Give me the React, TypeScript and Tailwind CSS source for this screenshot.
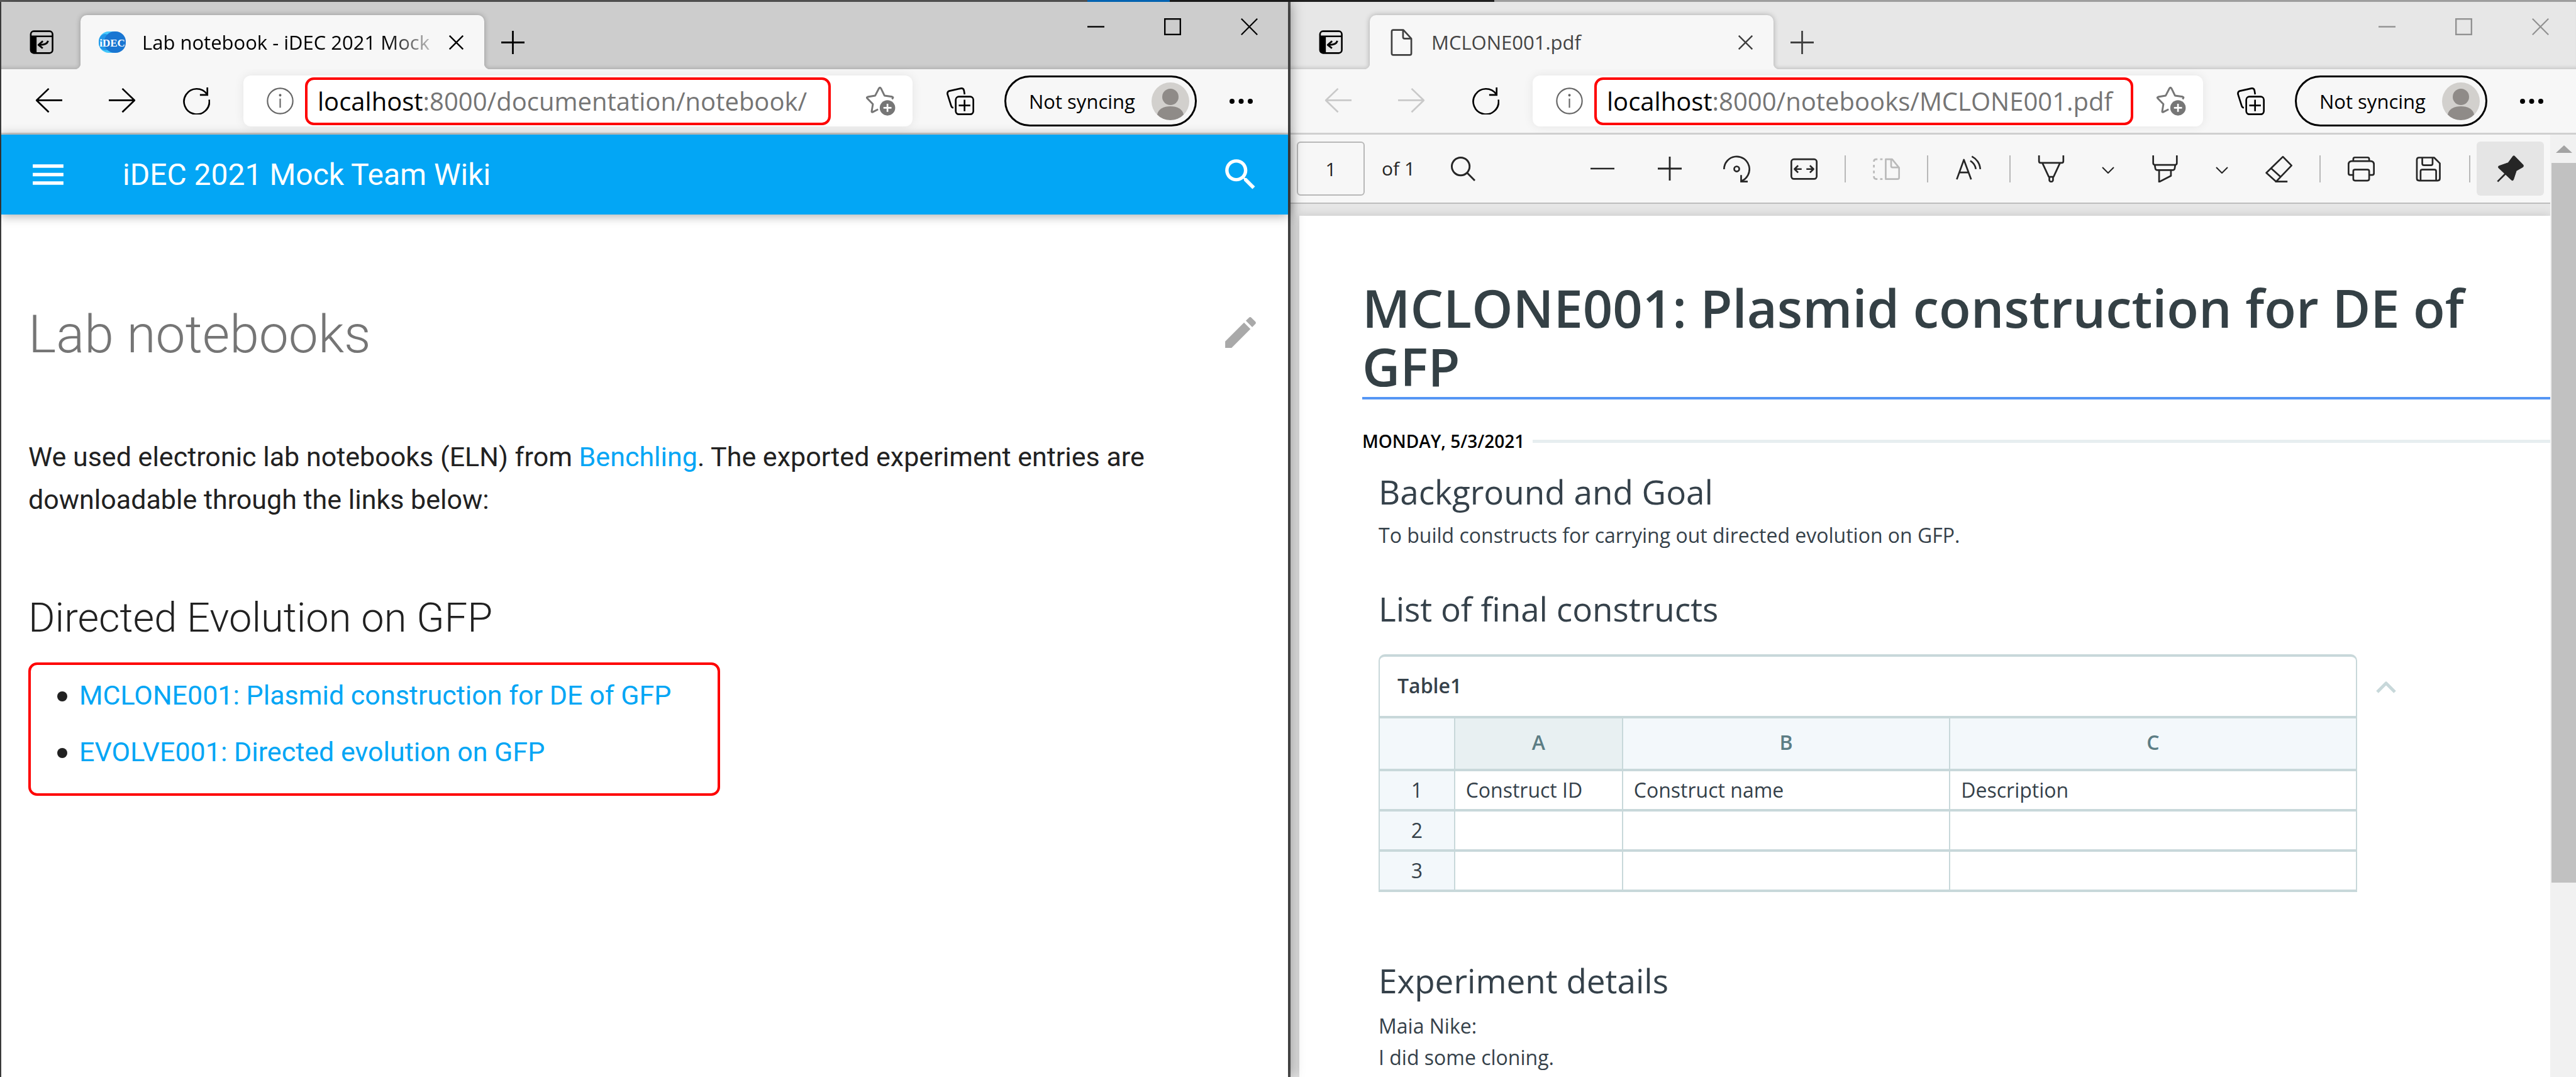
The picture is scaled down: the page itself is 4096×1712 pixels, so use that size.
import type { ReactNode } from "react";

type IconProps = {
  children: ReactNode;
  box?: string;
  className?: string;
  width?: number;
};

function Icon({ children, box = "0 0 16 16", className = "size-[43px]", width = 1 }: IconProps) {
  return (
    <svg
      viewBox={box}
      className={"shrink-0 " + className}
      fill="none"
      stroke="currentColor"
      strokeWidth={width}
      strokeLinejoin="round"
      aria-hidden="true"
    >
      {children}
    </svg>
  );
}

function IconButton({ label, children, className = "" }: { label: string; children: ReactNode; className?: string }) {
  return (
    <button type="button" aria-label={label} className={"flex shrink-0 items-center justify-center " + className}>
      {children}
    </button>
  );
}

const BackIcon = () => (
  <Icon>
    <path d="M16 7.6H.8M8 .7.8 7.6 8 14.6" />
  </Icon>
);

const ForwardIcon = () => (
  <Icon>
    <path d="M0 7.6h15.2M8 .7l7.2 6.9L8 14.6" />
  </Icon>
);

const RefreshIcon = () => (
  <Icon>
    <path d="M15.5 7.2A7.5 7.5 0 1 1 14.2 4" />
    <path d="M14.4 0v4.4H10" strokeLinejoin="miter" />
  </Icon>
);

const InfoIcon = () => (
  <Icon width={0.8}>
    <circle cx="8" cy="8" r="7.5" />
    <path d="M8 6.6v5.4" />
    <circle cx="8" cy="4.6" r=".35" fill="currentColor" />
  </Icon>
);

const StarAddIcon = () => (
  <Icon box="0 0 18 18" className="size-[48px]">
    <path
      d="M7.2 13.8 4 15.4q-.7.3-.6-.5l.7-4.2L.7 7.2q-.5-.6.3-.8l4.5-.8L7.7 1.3q.6-.9 1.2 0l2.1 4.3 4.6.7q.8.2.3.9l-.4.5"
      strokeWidth="1.1"
    />
    <circle cx="12.8" cy="12.9" r="4.6" fill="currentColor" stroke="none" />
    <path d="M12.8 10.5v4.8M10.4 12.9h4.8" stroke="#fff" />
  </Icon>
);

const CollectionsIcon = () => (
  <Icon box="0 0 16.5 16.5" className="size-[44px]">
    <rect x="5.5" y="5.5" width="10.5" height="10.5" rx="1.9" />
    <path d="M10.75 7.3v6.9M7.3 10.75h6.9" />
    <path d="M4.1 12.1q-1-.1-1.3-1.1L.6 4.1Q.3 2.6 1.7 2.1L8.4.6q1.6-.3 2 1.1l.4 2.4" />
  </Icon>
);

const MoreIcon = () => (
  <svg viewBox="0 0 37 8" className="h-[8px] w-[37px] shrink-0" fill="currentColor" aria-hidden="true">
    <circle cx="4" cy="4" r="4" />
    <circle cx="18.5" cy="4" r="4" />
    <circle cx="33" cy="4" r="4" />
  </svg>
);

const TabActionsIcon = () => (
  <Icon className="size-[38px]" width={1.1}>
    <rect x=".8" y=".7" width="14.6" height="14.6" rx="2" />
    <path d="M1 4.1h14.4" />
    <path d="M.8 4.1h3.9v11.2H2.8a2 2 0 0 1-2-2z" fill="currentColor" stroke="none" />
    <path d="M12.4 7.1c-.5 2-2.6 2.9-6.4 2.7M8.9 7.3 6 9.8l2.8 2.3" strokeWidth="1.2" />
  </Icon>
);

const PageIcon = () => (
  <Icon box="0 0 13 16" className="h-[43px] w-[35px]">
    <path d="M1.6.6h6L12.3 5.7v8.8q0 .9-.9.9H1.6q-.9 0-.9-.9v-13q0-.9.9-.9z" />
    <path d="M7.4.6v4.1q0 1 .9 1h4" />
  </Icon>
);

const PlusIcon = ({ className = "size-[37px]" }: { className?: string }) => (
  <Icon className={className} width={1.2}>
    <path d="M8 0v16M0 8h16" />
  </Icon>
);

const CrossIcon = ({ className, width }: { className: string; width: number }) => (
  <Icon className={className} width={width}>
    <path d="M.5.5l15 15M15.5.5l-15 15" />
  </Icon>
);

const IdecLogo = () => (
  <svg viewBox="0 0 43 34" className="h-[34px] w-[43px] shrink-0" role="img" aria-label="iDEC">
    <rect width="40" height="34" rx="16" fill="#45c8fb" />
    <rect x="0" y="4" width="20" height="26" rx="12" fill="#2196e8" />
    <rect x="9" width="34" height="34" rx="16" fill="#1976d2" />
    <text
      x="21.5"
      y="23.5"
      textAnchor="middle"
      fontFamily="Liberation Serif, serif"
      fontSize="17"
      fontWeight="700"
      fill="#fff"
    >
      iDEC
    </text>
  </svg>
);

const Avatar = () => (
  <svg viewBox="0 0 60 60" className="size-[60px] shrink-0" aria-hidden="true">
    <defs>
      <clipPath id="avatar-round">
        <circle cx="30" cy="30" r="30" />
      </clipPath>
    </defs>
    <circle cx="30" cy="30" r="30" fill="#d2d0cd" />
    <g clipPath="url(#avatar-round)" fill="#8f8b88">
      <circle cx="30" cy="23" r="13" />
      <path d="M9 51c2-9 10-13 21-13s19 4 21 13c-4 6-12 9-21 9S13 57 9 51z" />
    </g>
  </svg>
);

type BrowserProps = {
  tabIcon: ReactNode;
  tabTitle: string;
  host: string;
  path: string;
  active: boolean;
  urlBox: string;
  edge: string;
  controlsEdge: string;
  children: ReactNode;
};

function BrowserWindow({ tabIcon, tabTitle, host, path, active, urlBox, edge, controlsEdge, children }: BrowserProps) {
  return (
    <section className="flex min-w-0 flex-1 flex-col bg-white">
      <div
        className={
          "flex h-[107px] items-start justify-between overflow-hidden pl-[45px] shadow-[inset_0_-6px_5px_-3px_rgba(0,0,0,0.12)] " +
          (active ? "bg-[#cdcdcd]" : "bg-[#e7e7e7]")
        }
      >
        <div className="flex h-full items-center pt-[21px]">
          <IconButton label="Tab actions menu" className="mr-[43px] text-black">
            <TabActionsIcon />
          </IconButton>
          <div className="relative flex h-full w-[642px] items-center rounded-t-[10px] bg-[#f7f7f7] pr-[33px] pl-[29px] shadow-[0_0_8px_rgba(0,0,0,0.28)]">
            <span className="absolute bottom-0 -left-[10px] size-[10px] bg-[radial-gradient(circle_at_0_0,transparent_10px,#f7f7f7_11px)]" />
            <span className="absolute -right-[10px] bottom-0 size-[10px] bg-[radial-gradient(circle_at_100%_0,transparent_10px,#f7f7f7_11px)]" />
            <span className="mr-[26px] flex w-[43px] justify-center text-[#404040]">{tabIcon}</span>
            <span
              className={
                "min-w-0 flex-1 overflow-hidden text-[31px] leading-[44px] whitespace-nowrap " +
                (active
                  ? "text-black [mask-image:linear-gradient(to_right,black_84%,transparent_104%)]"
                  : "text-[#454545]")
              }
            >
              {tabTitle}
            </span>
            <IconButton label="Close tab" className={"ml-[26px] " + (active ? "text-black" : "text-[#404040]")}>
              <CrossIcon className="size-[23px]" width={1.7} />
            </IconButton>
          </div>
          <IconButton label="New tab" className={"ml-[27px] " + (active ? "text-black" : "text-[#404040]")}>
            <PlusIcon />
          </IconButton>
        </div>
        <div
          className={
            "flex items-center gap-[95px] pt-[26px] " + controlsEdge + (active ? " text-black" : " text-[#919191]")
          }
        >
          <IconButton label="Minimize">
            <Icon className="size-[27px]" width={1.4}>
              <path d="M0 8h16" />
            </Icon>
          </IconButton>
          <IconButton label="Maximize">
            <Icon className="size-[27px]" width={1.4}>
              <rect x=".7" y=".7" width="14.6" height="14.6" strokeLinejoin="miter" />
            </Icon>
          </IconButton>
          <IconButton label="Close window">
            <CrossIcon className="size-[27px]" width={1.3} />
          </IconButton>
        </div>
      </div>

      <div className={"flex h-[104px] items-center border-b-[3px] border-[#d0d0d0] bg-[#f7f7f7] pl-[54px] " + edge}>
        <IconButton label="Back" className={active ? "text-black" : "text-[#c9c9c9]"}>
          <BackIcon />
        </IconButton>
        <IconButton label="Forward" className={"ml-[74px] " + (active ? "text-black" : "text-[#c9c9c9]")}>
          <ForwardIcon />
        </IconButton>
        <IconButton label="Refresh" className="ml-[75px] text-black">
          <RefreshIcon />
        </IconButton>
        <div className="ml-[53px] flex h-[81px] min-w-0 flex-1 items-center rounded-[12px] bg-white pr-[26px] pl-[37px] shadow-[0_0_16px_rgba(0,0,0,0.08)]">
          <IconButton label="View site information" className="text-[#666]">
            <InfoIcon />
          </IconButton>
          <div
            role="textbox"
            tabIndex={0}
            aria-label="Address"
            className={
              "ml-[18px] flex h-[76px] items-center rounded-[14px] border-4 border-[#fe0000] pl-[16px] text-[40px] leading-[56px] whitespace-nowrap text-[#757575] " +
              urlBox
            }
          >
            <span className="text-black">{host}</span>
            {path}
          </div>
          <IconButton label="Add this page to favorites" className="ml-auto text-[#767676]">
            <StarAddIcon />
          </IconButton>
        </div>
        <IconButton label="Collections" className="ml-[54px] text-black">
          <CollectionsIcon />
        </IconButton>
        <button
          type="button"
          className="ml-[48px] flex h-[81px] w-[306px] shrink-0 items-center justify-between rounded-full border-[3px] border-black pr-[9px] pl-[36px] text-[31px] leading-[44px] whitespace-nowrap text-black"
        >
          Not syncing
          <Avatar />
        </button>
        <IconButton label="Settings and more" className="ml-[52px] text-black">
          <MoreIcon />
        </IconButton>
      </div>
      {children}
    </section>
  );
}

const notebooks = ["MCLONE001: Plasmid construction for DE of GFP", "EVOLVE001: Directed evolution on GFP"];

function WikiPage() {
  return (
    <div className="flex flex-1 flex-col bg-white font-['Roboto',sans-serif]">
      <header className="flex h-[127px] items-center bg-[#03a6f5] pr-[43px] pl-[42px] text-white shadow-[0_2px_16px_rgba(0,0,0,0.35)]">
        <IconButton label="Open menu">
          <svg viewBox="0 0 24 24" className="size-[65px]" fill="currentColor" aria-hidden="true">
            <path d="M3 6h18v2H3V6m0 5h18v2H3v-2m0 5h18v2H3v-2Z" />
          </svg>
        </IconButton>
        <span className="ml-[86px] flex-1 text-[48px] leading-[64px]">iDEC 2021 Mock Team Wiki</span>
        <IconButton label="Search">
          <svg viewBox="0 0 24 24" className="size-[65px]" fill="currentColor" aria-hidden="true">
            <path d="M9.5 3A6.5 6.5 0 0 1 16 9.5c0 1.61-.59 3.09-1.56 4.23l.27.27h.79l5 5-1.5 1.5-5-5v-.79l-.27-.27A6.516 6.516 0 0 1 9.5 16 6.5 6.5 0 0 1 3 9.5 6.5 6.5 0 0 1 9.5 3m0 2C7 5 5 7 5 9.5S7 14 9.5 14 14 12 14 9.5 12 5 9.5 5z" />
          </svg>
        </IconButton>
      </header>
      <main className="pt-[135px] pl-[43px] text-[43px] leading-[68px] text-[#212121]">
        <div className="flex items-start justify-between pr-[43px]">
          <h1 className="text-[84px] leading-[112px] font-light text-[#757575]">Lab notebooks</h1>
          <a href="#edit" aria-label="Edit this page" className="pt-[20px] text-[#a9a9a9]">
            <svg viewBox="0 0 24 24" className="size-[65px]" fill="currentColor" aria-hidden="true">
              <path d="M20.71 7.04c.39-.39.39-1.04 0-1.41l-2.34-2.34c-.37-.39-1.02-.39-1.41 0l-1.84 1.83 3.75 3.75M3 17.25V21h3.75L17.81 9.93l-3.75-3.75L3 17.25z" />
            </svg>
          </a>
        </div>
        <p className="mt-[104px] w-[1860px] max-w-full">
          We used electronic lab notebooks (ELN) from{" "}
          <a href="#benchling" className="text-[#03a6f5]">
            Benchling
          </a>
          . The exported experiment entries are downloadable through the links below:
        </p>
        <h2 className="mt-[108px] text-[65px] leading-[92px] font-light">Directed Evolution on GFP</h2>
        <ul className="mt-[25px] flex w-[1100px] flex-col gap-[22px] rounded-[14px] border-4 border-[#fe0000] pt-[14px] pb-[32px] pl-[42px]">
          {notebooks.map((title) => (
            <li key={title} className="flex items-center">
              <span className="mt-[4px] mr-[19px] size-[16px] rounded-full bg-[#212121]" />
              <a href="#notebook" className="text-[#03a6f5]">
                {title}
              </a>
            </li>
          ))}
        </ul>
      </main>
    </div>
  );
}

const Separator = () => <span className="h-[43px] w-[2px] bg-[#b8b8b8]" />;

const ChevronDown = () => (
  <Icon box="0 0 20 12" className="h-[12px] w-[20px]" width={2}>
    <path d="M1 1l9 9 9-9" />
  </Icon>
);

function PdfToolbar() {
  return (
    <div className="flex h-[110px] items-center border-b-2 border-[#bdbdbd] bg-[#f7f7f7] px-[10px] text-[#262626]">
      <label className="flex items-center gap-[27px] text-[30px] leading-[40px] whitespace-nowrap">
        <input
          aria-label="Page number"
          defaultValue="1"
          className="h-[86px] w-[108px] rounded-[6px] border-2 border-[#b8b8b8] bg-[#f7f7f7] text-center"
        />
        of 1
      </label>
      <IconButton label="Find" className="ml-[57px]">
        <Icon className="size-[39px]" width={1.2}>
          <circle cx="6.4" cy="6.4" r="5.8" />
          <path d="M10.6 10.6 15.6 15.6" />
        </Icon>
      </IconButton>
      <div className="ml-auto flex items-center gap-[43px]">
        <div className="flex items-center gap-[64px]">
          <IconButton label="Zoom out" className="w-[43px]">
            <Icon className="size-[38px]" width={1.1}>
              <path d="M0 8h16" />
            </Icon>
          </IconButton>
          <IconButton label="Zoom in" className="w-[43px]">
            <PlusIcon className="size-[38px]" />
          </IconButton>
          <IconButton label="Rotate">
            <Icon>
              <path d="M.5 8.2A7.5 7.5 0 1 1 10.9 15.1" />
              <circle cx="8" cy="8" r="1.5" />
              <path d="M10.6 11.6v3.9h3.9" strokeLinejoin="miter" />
            </Icon>
          </IconButton>
          <IconButton label="Fit to width">
            <Icon>
              <rect x=".5" y="2.3" width="15" height="11.6" rx="1.5" />
              <path d="M2.4 8.1h4.2M4.5 6 2.4 8.1l2.1 2.1M13.6 8.1H9.4M11.5 6l2.1 2.1-2.1 2.1" />
            </Icon>
          </IconButton>
        </div>
        <Separator />
        <IconButton label="Page view" className="text-[#bababa]">
          <Icon>
            <path d="M7.6 2.3h3.8l4.1 5v5.8q0 .9-.9.9h-7z" />
            <path d="M10.8 2.5v3.8q0 .8.8.8h3.8" />
            <path d="M2.7 2.3H2Q.6 2.3.6 3.7M.6 5.6v1.6M.6 9v1.6M.6 12.3Q.6 14 2 14h.7M4.3 2.3h1.4M4.3 14h1.4" />
          </Icon>
        </IconButton>
        <Separator />
        <IconButton label="Read aloud">
          <Icon>
            <path d="M.9 14.2 5.1 2.6 9.4 14.2M2.4 10.1h5.5" />
            <path d="M8.9 3.2a7 7 0 0 1 3.3 4.9M9.8.6a9.5 9.5 0 0 1 5 7.5" />
          </Icon>
        </IconButton>
        <Separator />
        <div className="flex items-center gap-[59px]">
          <IconButton label="Draw">
            <Icon>
              <path d="M.8 0v3.4q0 1 1 1h12.4q1 0 1-1V0M2.8 4.5l3.8 8.2h2.8l3.8-8.2M6.9 12.7v1.8a1.1 1.1 0 0 0 2.2 0v-1.8" />
            </Icon>
          </IconButton>
          <IconButton label="Draw options" className="mt-[6px]">
            <ChevronDown />
          </IconButton>
          <IconButton label="Highlight">
            <Icon>
              <path d="M1 0v4.6q0 1 1 1h12q1 0 1-1V0M1.9 5.6l.4 2.2q.2.9 1.1.9h9.2q.9 0 1.1-.9l.4-2.2M4.5 8.7v7l7-3.6V8.7" />
            </Icon>
          </IconButton>
          <IconButton label="Highlight options" className="mt-[6px]">
            <ChevronDown />
          </IconButton>
          <IconButton label="Erase">
            <Icon>
              <path d="M10.4.8 15.5 6 6.4 15.5.6 10.3zM3.3 7.5l5.8 5.2M5.8 15.5h7.3" />
            </Icon>
          </IconButton>
        </div>
        <Separator />
        <div className="flex items-center gap-[64px]">
          <IconButton label="Print">
            <Icon>
              <path d="M3.3 3.4V2.2q0-1 1-1h7.4q1 0 1 1v1.2M3.3 11.6H1.5q-1 0-1-1V5.4q0-2 2-2h11q2 0 2 2v5.2q0 1-1 1h-1.8" />
              <rect x="3.3" y="8.4" width="9.4" height="6.5" rx="1" />
            </Icon>
          </IconButton>
          <IconButton label="Save">
            <Icon>
              <path d="M2.4 1.3h8.9L14.7 4.7v8.9q0 1.3-1.3 1.3h-11q-1.3 0-1.3-1.3v-11q0-1.3 1.3-1.3z" />
              <path d="M4.3 1.4v3.4q0 1 1 1h4.1q1 0 1-1V1.4M3.3 14.8V9.4q0-1 1-1h7.2q1 0 1 1v5.4" />
            </Icon>
          </IconButton>
        </div>
        <div className="flex items-center gap-[10px]">
          <Separator />
          <button
            type="button"
            aria-label="Unpin toolbar"
            className="flex h-[86px] w-[107px] items-center justify-center rounded-[6px] bg-[#e5e5e5]"
          >
            <Icon>
              <path
                d="M9.6.6Q10.1.1 10.6.6L15.5 5.6q.6.8-.3 1.4l-3.6 2-1.7 5.2q-.4 1-1.2.3L1.2 7.4Q.6 6.6 1.5 6.2l5.3-1.8z"
                fill="currentColor"
                strokeWidth=".4"
              />
              <path d="M5 11 .5 15.5" />
            </Icon>
          </button>
        </div>
      </div>
    </div>
  );
}

const rows = [
  ["1", "Construct ID", "Construct name", "Description"],
  ["2", "", "", ""],
  ["3", "", "", ""],
];

function PdfPage() {
  return (
    <article className="ml-[14px] flex-1 bg-white pt-[99px] pl-[100px] text-[32px] leading-[50px] text-[#35414a] shadow-[0_0_14px_rgba(0,0,0,0.15)]">
      <h1 className="border-b-4 border-[#5596f5] pr-[60px] pb-[3px] text-[83px] leading-[93px] font-semibold text-[#344045]">
        MCLONE001: Plasmid construction for DE of GFP
      </h1>
      <div className="mt-[46px] flex items-center gap-[13px]">
        <span className="text-[28px] leading-[40px] font-semibold text-black">MONDAY, 5/3/2021</span>
        <span className="h-[5px] flex-1 bg-[#e7eef0]" />
      </div>
      <div className="pl-[26px]">
        <h2 className="mt-[26px] text-[53px] leading-[70px]">Background and Goal</h2>
        <p className="mt-[9px]">To build constructs for carrying out directed evolution on GFP.</p>
        <h2 className="mt-[57px] text-[53px] leading-[70px]">List of final constructs</h2>
        <div className="mt-[37px] flex items-start gap-[30px]">
          <table className="w-[83.5%] table-fixed border-collapse text-left">
            <caption className="h-[98px] caption-top rounded-t-[10px] border-x-2 border-t-4 border-[#c8d8da] pl-[28px] text-left leading-[91px] font-semibold text-[#35414a]">
              Table1
            </caption>
            <colgroup>
              <col className="w-[7.7%]" />
              <col className="w-[17.2%]" />
              <col className="w-[33.5%]" />
              <col className="w-[41.6%]" />
            </colgroup>
            <thead>
              <tr className="h-[84px] bg-[#f3f8fb] text-center font-semibold text-[#5c7d84]">
                <td className="border-x-2 border-y-4 border-[#c8d8da]" />
                <th scope="col" className="border-x-2 border-y-4 border-[#c8d8da] bg-[#e8f0f2] pb-[4px] font-semibold">
                  A
                </th>
                <th scope="col" className="border-x-2 border-y-4 border-[#c8d8da] pb-[4px] font-semibold">
                  B
                </th>
                <th scope="col" className="border-x-2 border-y-4 border-[#c8d8da] pb-[4px] font-semibold">
                  C
                </th>
              </tr>
            </thead>
            <tbody>
              {rows.map(([index, ...cells]) => (
                <tr key={index} className="h-[64px]">
                  <th
                    scope="row"
                    className="border-x-2 border-y-4 border-[#c8d8da] bg-[#f3f8fb] text-center font-normal"
                  >
                    {index}
                  </th>
                  {cells.map((cell, column) => (
                    <td key={column} className="border-x-2 border-y-4 border-[#c8d8da] pl-[17px]">
                      {cell}
                    </td>
                  ))}
                </tr>
              ))}
            </tbody>
          </table>
          <IconButton label="Collapse table" className="mt-[42px] text-[#c8d8da]">
            <Icon box="0 0 32 20" className="h-[20px] w-[32px]" width={5}>
              <path d="M2 18 16 4l14 14" />
            </Icon>
          </IconButton>
        </div>
        <h2 className="mt-[106px] text-[53px] leading-[70px]">Experiment details</h2>
        <p className="mt-[12px]">
          Maia Nike:
          <br />I did some cloning.
        </p>
      </div>
    </article>
  );
}

function PdfViewer() {
  return (
    <div className="flex flex-1">
      <div className="flex min-w-0 flex-1 flex-col overflow-hidden bg-[#e6e6e6]">
        <PdfToolbar />
        <div className="flex flex-1 flex-col pt-[19px]">
          <PdfPage />
        </div>
      </div>
      <div className="flex w-[41px] flex-col bg-[#f1f1f1] pl-[2px]">
        <div className="flex h-[45px] items-center justify-center">
          <svg viewBox="0 0 26 12" className="h-[12px] w-[26px]" fill="#a3a3a3" aria-hidden="true">
            <path d="M13 0 26 12H0z" />
          </svg>
        </div>
        <div className="grow-[787] bg-[#c1c1c1]" />
        <div className="grow-[213]" />
      </div>
    </div>
  );
}

export default function App() {
  return (
    <div className="flex min-h-screen flex-col overflow-hidden bg-white font-['Open_Sans','Noto_Sans',sans-serif]">
      <div className="flex h-[3px]">
        <span className="grow-[422] bg-[#5f5f5f]" />
        <span className="grow-[32] bg-[#0078d7]" />
        <span className="grow-[126] bg-[#1f1f1f]" />
        <span className="grow-[420] bg-[#9e9e9e]" />
      </div>
      <div className="flex flex-1">
        <div className="relative z-10 flex w-1/2 shrink-0 border-l-2 border-[#3a3a3a] shadow-[4px_0_20px_rgba(0,0,0,0.4)]">
          <BrowserWindow
            tabIcon={<IdecLogo />}
            tabTitle="Lab notebook - iDEC 2021 Mock"
            host="localhost"
            path=":8000/documentation/notebook/"
            active
            urlBox="w-[836px]"
            edge="pr-[56px]"
            controlsEdge="pr-[48px]"
          >
            <WikiPage />
          </BrowserWindow>
        </div>
        <div className="flex min-w-0 flex-1 border-l-4 border-[#555]">
          <BrowserWindow
            tabIcon={<PageIcon />}
            tabTitle="MCLONE001.pdf"
            host="localhost"
            path=":8000/notebooks/MCLONE001.pdf"
            active={false}
            urlBox="w-[857px]"
            edge="pr-[52px]"
            controlsEdge="pr-[43px]"
          >
            <PdfViewer />
          </BrowserWindow>
        </div>
      </div>
    </div>
  );
}
